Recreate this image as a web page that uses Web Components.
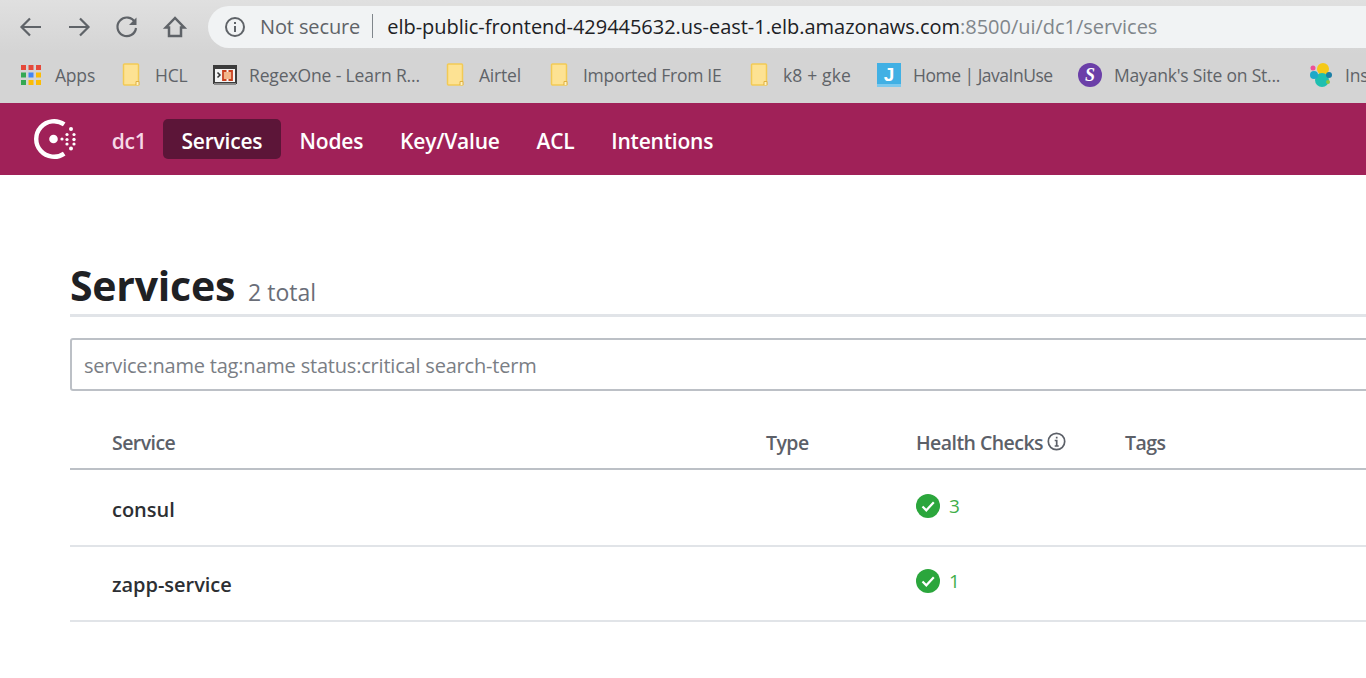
<!doctype html>
<html>
<head>
<meta charset="utf-8">
<title>Services - Consul</title>
<style>
  html, body { margin: 0; height: 100%; overflow: hidden; background: #fff; }
  body { font-family: "Open Sans", "Noto Sans", sans-serif; }
</style>
</head>
<body>
<browser-toolbar></browser-toolbar>
<bookmark-bar>
  <bookmark-item label="Apps" icon="apps" style="--text-w:41px;--icon-w:20px;--pad:2px"></bookmark-item>
  <bookmark-item label="HCL" icon="folder" style="--text-w:32px"></bookmark-item>
  <bookmark-item label="RegexOne - Learn R..." icon="regex" style="--text-w:171px;--icon-w:24px;--pad:0px;--track:-.13px"></bookmark-item>
  <bookmark-item label="Airtel" icon="folder" style="--text-w:45px"></bookmark-item>
  <bookmark-item label="Imported From IE" icon="folder" style="--text-w:141px;--track:-.28px"></bookmark-item>
  <bookmark-item label="k8 + gke" icon="folder" style="--text-w:68px;--track:.15px"></bookmark-item>
  <bookmark-item label="Home | JavaInUse" icon="java" style="--text-w:139px;--icon-w:24px;--pad:0px;--track:-.5px"></bookmark-item>
  <bookmark-item label="Mayank's Site on St..." icon="site" style="--text-w:170px;--icon-w:24px;--pad:0px"></bookmark-item>
  <bookmark-item label="Ins" icon="elastic" style="--text-w:30px;--icon-w:24px;--pad:-1px"></bookmark-item>
</bookmark-bar>
<consul-nav>
  <nav-link muted>dc1</nav-link>
  <nav-link active>Services</nav-link>
  <nav-link>Nodes</nav-link>
  <nav-link>Key/Value</nav-link>
  <nav-link>ACL</nav-link>
  <nav-link>Intentions</nav-link>
</consul-nav>
<services-page>
  <service-row name="consul" checks="3"></service-row>
  <service-row name="zapp-service" checks="1"></service-row>
</services-page>

<script>
(function() {
  const FONT = '"Open Sans", "Noto Sans", sans-serif';

  // Grey toolbar with the address pill
  class BrowserToolbar extends HTMLElement {
    constructor() {
      super();
      this.attachShadow({mode: 'open'}).innerHTML = `
        <style>
          :host { display: flex; align-items: flex-start; height: 54px; box-sizing: border-box; padding: 6px 0 0 18px;
                  background: linear-gradient(#e0e0e0, #d4d4d4); font-family: ${FONT}; overflow: hidden; }
          .btn { width: 26px; height: 42px; margin-right: 22px; display: flex; align-items: center; justify-content: center; }
          svg { display: block; }
          .pill { flex: 1; margin-left: -2px; height: 42px; background: #f1f3f4; border-radius: 21px 0 0 21px; display: flex; align-items: center;
                  padding-left: 16px; padding-bottom: 2px; box-sizing: border-box; font-size: 20px; white-space: nowrap; letter-spacing: -.03px; }
          .pill svg { margin-top: 2px; }
          .sec { color: #5f6368; margin-left: 14px; letter-spacing: -.12px; }
          .sep { width: 1px; height: 24px; background: #80868b; margin: 0 14px 0 12px; }
          .host { color: #202124; }
          .rest { color: #80868b; }
        </style>
        <div class="btn"><svg width="26" height="26" viewBox="0 0 26 26" fill="none" stroke="#5f6368" stroke-width="2.2"><path d="M23 13H4M12 4.5 3.5 13l8.500 8.500"/></svg></div>
        <div class="btn"><svg width="26" height="26" viewBox="0 0 26 26" fill="none" stroke="#5f6368" stroke-width="2.2"><path d="M3 13h19M14 4.500l8.500 8.500-8.500 8.500"/></svg></div>
        <div class="btn"><svg width="26" height="26" viewBox="0 0 26 26" fill="none" stroke="#5f6368" stroke-width="2.200"><path d="M21 8.500A9.300 9.300 0 1 0 22 14"/><path d="M22.500 3.500v7.500H15" fill="#5f6368" stroke="none"/></svg></div>
        <div class="btn"><svg width="26" height="26" viewBox="0 0 26 26" fill="none" stroke="#5f6368" stroke-width="2.500"><path d="M13 4 3.800 13.500H7V22h12v-8.500h3.200z"/></svg></div>
        <div class="pill">
          <svg width="22" height="22" viewBox="0 0 22 22" fill="none" stroke="#5f6368" stroke-width="2"><circle cx="11" cy="11" r="9"/><path d="M11 10v6M11 6v2"/></svg>
          <span class="sec">Not secure</span><span class="sep"></span>
          <span class="host">elb-public-frontend-429445632.us-east-1.elb.amazonaws.com</span><span class="rest">:8500/ui/dc1/services</span>
        </div>`;
    }
  }

  class BookmarkBar extends HTMLElement {
    constructor() {
      super();
      this.attachShadow({mode: 'open'}).innerHTML = `
        <style>
          :host { display: flex; align-items: center; height: 49px; box-sizing: border-box; padding: 0 0 7px 21px; gap: 26px;
                  background: #d4d4d4; font-family: ${FONT}; overflow: hidden; white-space: nowrap; }
        </style>
        <slot></slot>`;
    }
  }

  const BOOKMARK_ICONS = {
    apps: `<svg width="20" height="20" viewBox="0 0 20 20">
      ${[['#e5493a','#e5493a','#e5493a'],['#34a853','#4285f4','#fbbc05'],['#34a853','#fbbc05','#fbbc05']].map((row, y) =>
        row.map((c, x) => `<rect x="${x * 7.5}" y="${y * 7.5}" width="5" height="5" fill="${c}"/>`).join('')).join('')}</svg>`,
    folder: `<svg width="18" height="24" viewBox="0 0 18 24"><path d="M2.500 1h13a1 1 0 0 1 1 1v20h-14a1 1 0 0 1-1-1V2a1 1 0 0 1 1-1z" fill="#fde293" stroke="#f2ca55" stroke-width="1.500"/><path d="M14 22v-3.500h3V22" fill="#fff3c4" stroke="#e0b040"/></svg>`,
    regex: `<svg width="24" height="20" viewBox="0 0 24 20"><rect x="1" y="1" width="22" height="17" fill="#f4f4f4" stroke="#3c3c3c" stroke-width="2"/><rect x="1" y="1" width="22" height="3" fill="#3c3c3c"/><rect x="1" y="18" width="22" height="2" fill="#8a8a8a"/><path d="M4.500 7.500l2.500 2.500-2.500 2.500" fill="none" stroke="#333" stroke-width="1.500"/><rect x="11" y="7" width="7" height="7" fill="#f3b58a"/><path d="M13.500 6h-3.500v9h3.500M15.500 6H19v9h-3.500" fill="none" stroke="#c8401e" stroke-width="1.800"/></svg>`,
    java: `<svg width="24" height="24" viewBox="0 0 24 24"><rect width="24" height="24" fill="#41b0e4"/><rect y="21" width="24" height="3" fill="#7cc9ee"/><text x="12" y="18" text-anchor="middle" font-family="Liberation Sans, sans-serif" font-weight="700" font-size="19" fill="#fff">J</text></svg>`,
    site: `<svg width="24" height="24" viewBox="0 0 24 24"><circle cx="12" cy="12" r="12" fill="#6b3fa8"/><text x="12" y="18" text-anchor="middle" font-family="Liberation Serif, serif" font-style="italic" font-weight="700" font-size="18" fill="#fff">S</text></svg>`,
    elastic: `<svg width="24" height="24" viewBox="0 0 24 24"><circle cx="13" cy="6" r="6" fill="#f5c918"/><circle cx="12" cy="17" r="7" fill="#1fbfb0"/><circle cx="4" cy="12" r="4" fill="#1fa9c9"/><circle cx="3" cy="5" r="2.500" fill="#ee5097"/><circle cx="19" cy="12" r="3" fill="#1b7fa6"/><circle cx="18" cy="19" r="2" fill="#8cc63f"/></svg>`
  };

  class BookmarkItem extends HTMLElement {
    constructor() {
      super();
      this.attachShadow({mode: 'open'});
    }
    connectedCallback() {
      this.shadowRoot.innerHTML = `
        <style>
          :host { display: flex; align-items: center; flex: none; gap: 12px; }
          svg { display: block; flex: none; }
          .icon { width: var(--icon-w, 18px); flex: none; margin-right: var(--pad, 3px); }
          .label { width: var(--text-w); flex: none; font-size: 17.500px; letter-spacing: var(--track, -.2px); color: #5f6368; }
        </style>
        <span class="icon">${BOOKMARK_ICONS[this.getAttribute('icon')]}</span>
        <span class="label">${this.getAttribute('label')}</span>`;
    }
  }

  class ConsulNav extends HTMLElement {
    constructor() {
      super();
      this.attachShadow({mode: 'open'}).innerHTML = `
        <style>
          :host { display: flex; align-items: center; gap: .75px; height: 72px; box-sizing: border-box; padding-left: 33px; background: #a02158; font-family: ${FONT}; }
          svg { display: block; margin-right: 16px; flex: none; }
        </style>
        <svg width="44" height="42" viewBox="0 0 44 42" fill="#fff">
          <path d="M31.200 6.400A17.800 17.800 0 1 0 31.200 35.600" fill="none" stroke="#fff" stroke-width="4.400"/>
          <circle cx="20.500" cy="21" r="4.300"/><circle cx="29" cy="21" r="1.600"/>
          <circle cx="38" cy="11" r="2"/><circle cx="34" cy="16.500" r="1.600"/><circle cx="41" cy="16.500" r="1.600"/><circle cx="34" cy="21.500" r="1.600"/><circle cx="41" cy="21.500" r="1.700"/><circle cx="34" cy="26" r="1.600"/><circle cx="41" cy="26" r="1.600"/><circle cx="38" cy="30.500" r="2"/>
        </svg>
        <slot></slot>`;
    }
  }

  class NavLink extends HTMLElement {
    constructor() {
      super();
      this.attachShadow({mode: 'open'}).innerHTML = `
        <style>
          :host { display: block; height: 40px; line-height: 45px; padding: 0 18px; border-radius: 5px; font-size: 21px; font-weight: 600; letter-spacing: -.2px; color: #fff; white-space: nowrap; }
          :host([active]) { background: #5c1538; padding-right: 18.500px; }
          :host([muted]) { color: #f6d8e6; padding-right: 16px; }
        </style>
        <slot></slot>`;
    }
  }

  class ServicesPage extends HTMLElement {
    constructor() {
      super();
      this.attachShadow({mode: 'open'}).innerHTML = `
        <style>
          :host { display: block; width: 1400px; box-sizing: border-box; margin-left: 70px; padding-top: 84px; font-family: ${FONT}; }
          h1 { margin: 0; height: 55px; display: flex; align-items: baseline; border-bottom: 3px solid #e1e4e8; font-size: 41px; line-height: 52px; font-weight: 700; letter-spacing: -.23px; color: #1f2124; }
          h1 small { margin-left: 13px; font-size: 23px; font-weight: 400; letter-spacing: 0; color: #6a6e78; }
          input { display: block; width: 100%; box-sizing: border-box; height: 53px; margin-top: 21px; padding: 2px 12px 0; border: 2px solid #bcc0c6; border-radius: 3px; font: 20px ${FONT}; letter-spacing: -.2px; outline: none; }
          input::placeholder { color: #7a7e85; opacity: 1; }
          .head { display: grid; grid-template-columns: 696px 150px 209px 1fr; height: 79px; margin-bottom: 2px; box-sizing: border-box; padding-top: 38px; border-bottom: 2px solid #bcc0c6; font-size: 19.500px; font-weight: 600; letter-spacing: -.55px; color: #5c6068; line-height: 27px; }
          .head span:first-child { padding-left: 42px; }
          .info { display: inline-block; vertical-align: -1px; margin-left: 4px; }
        </style>
        <h1>Services <small>2 total</small></h1>
        <input type="text" placeholder="service:name tag:name status:critical search-term" aria-label="Search">
        <div class="head">
          <span>Service</span><span>Type</span>
          <span>Health Checks<svg class="info" width="19" height="19" viewBox="0 0 19 19" fill="none" stroke="#5c6068" stroke-width="1.700"><circle cx="9.500" cy="9.500" r="8.200"/><path d="M7.700 8.500h2v5.500M7.700 14h4M9.700 4.800v1.800"/></svg></span>
          <span>Tags</span>
        </div>
        <slot></slot>`;
    }
  }

  class ServiceRow extends HTMLElement {
    constructor() {
      super();
      this.attachShadow({mode: 'open'});
    }
    connectedCallback() {
      this.shadowRoot.innerHTML = `
        <style>
          :host { display: grid; grid-template-columns: 696px 150px 209px 1fr; height: 75px; box-sizing: border-box; border-bottom: 2px solid #e1e4e8; align-items: center; }
          .name { padding-left: 42px; font-size: 20px; font-weight: 600; letter-spacing: -.03px; color: #2d2f33; padding-top: 2px; }
          .checks { display: flex; align-items: center; gap: 9px; color: #3fae49; font-size: 19px; padding-bottom: 6px; }
          svg { display: block; }
        </style>
        <span class="name">${this.getAttribute('name')}</span>
        <span></span>
        <span class="checks"><svg width="24" height="24" viewBox="0 0 24 24"><circle cx="12" cy="12" r="12" fill="#2ba63c"/><path d="M6.500 12.500l3.800 3.800 7.500-8" fill="none" stroke="#fff" stroke-width="2.200"/></svg>${this.getAttribute('checks')}</span>
        <span></span>`;
    }
  }

  customElements.define('browser-toolbar', BrowserToolbar);
  customElements.define('bookmark-bar', BookmarkBar);
  customElements.define('bookmark-item', BookmarkItem);
  customElements.define('consul-nav', ConsulNav);
  customElements.define('nav-link', NavLink);
  customElements.define('services-page', ServicesPage);
  customElements.define('service-row', ServiceRow);
})();
</script>
</body>
</html>
